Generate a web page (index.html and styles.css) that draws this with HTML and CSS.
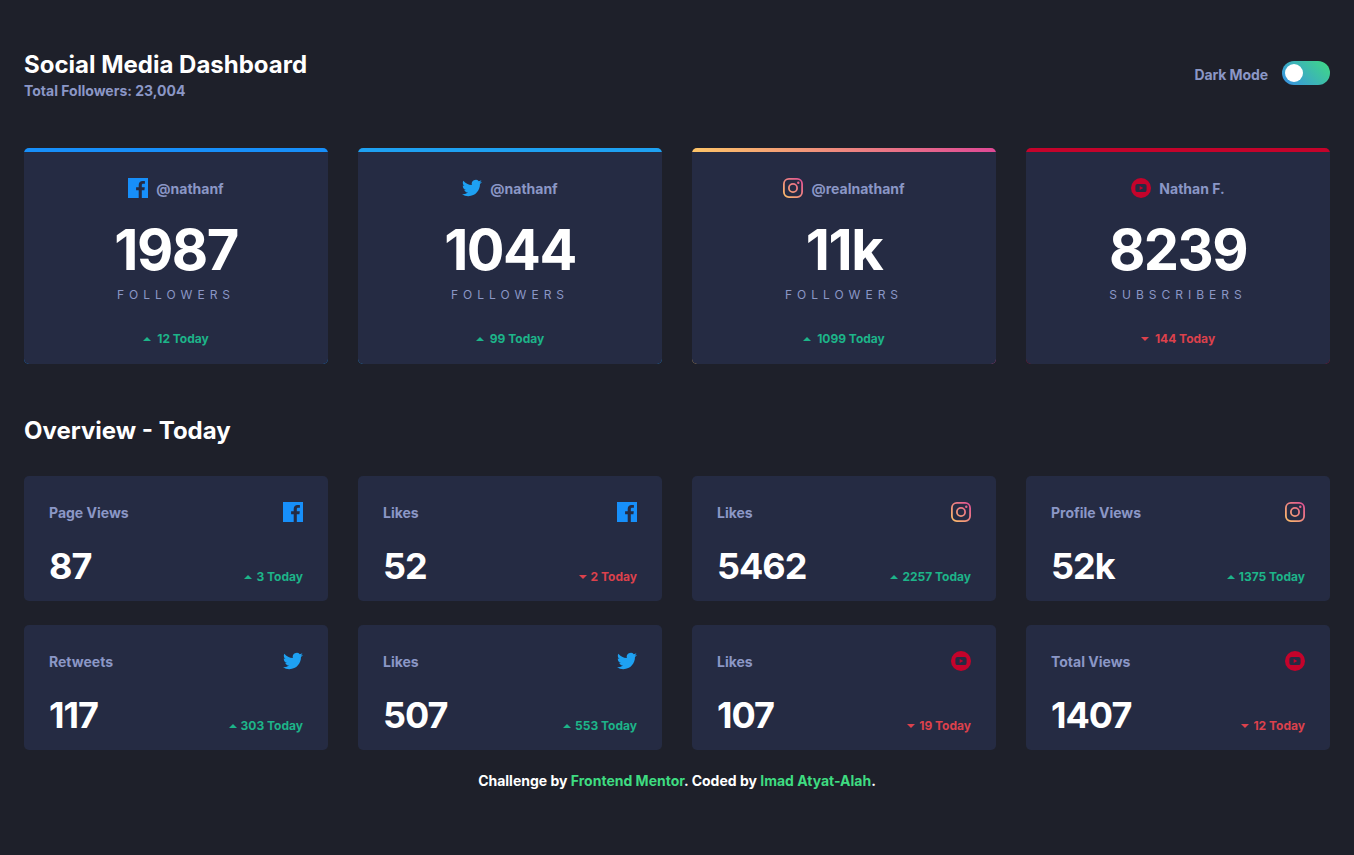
FILE: index.html
```html
<!DOCTYPE html>
<html lang="en">
<head>
<meta charset="utf-8">
<title>Social Media Dashboard</title>
<link rel="stylesheet" href="styles.css">
</head>
<body>
<svg class="defs" aria-hidden="true">
  <defs>
    <linearGradient id="ig" x1="0" y1="20" x2="20" y2="0" gradientUnits="userSpaceOnUse">
      <stop offset="0" stop-color="#fdc468"/>
      <stop offset="1" stop-color="#df4996"/>
    </linearGradient>
    <symbol id="i-fb" viewBox="0 0 20 20">
      <path fill="#178ffa" d="M0 0h20v20H0z"/>
      <path fill="#252b43" d="M10.7 20v-7.75H8.1V9.24h2.6V7c0-2.58 1.58-3.98 3.88-3.98 1.1 0 2.05.08 2.33.12v2.7h-1.6c-1.25 0-1.5.6-1.5 1.47v1.93h2.99l-.39 3.01h-2.6V20z"/>
    </symbol>
    <symbol id="i-tw" viewBox="0 0 24 24">
      <path fill="#1ea1f2" d="M23.953 4.57a10 10 0 01-2.825.775 4.958 4.958 0 002.163-2.723c-.951.555-2.005.959-3.127 1.184a4.92 4.92 0 00-8.384 4.482C7.69 8.095 4.067 6.13 1.64 3.162a4.822 4.822 0 00-.666 2.475c0 1.71.87 3.213 2.188 4.096a4.904 4.904 0 01-2.228-.616v.06a4.923 4.923 0 003.946 4.827 4.996 4.996 0 01-2.212.085 4.936 4.936 0 004.604 3.417 9.867 9.867 0 01-6.102 2.105c-.39 0-.779-.023-1.17-.067a13.995 13.995 0 007.557 2.209c9.053 0 13.998-7.496 13.998-13.985 0-.21 0-.42-.015-.63A9.935 9.935 0 0024 4.59z"/>
    </symbol>
    <symbol id="i-ig" viewBox="0 0 20 20">
      <rect x=".9" y=".9" width="18.2" height="18.2" rx="5" fill="none" stroke="url(#ig)" stroke-width="1.8"/>
      <circle cx="10" cy="10" r="4.1" fill="none" stroke="url(#ig)" stroke-width="1.8"/>
      <circle cx="15.3" cy="4.7" r="1.2" fill="url(#ig)"/>
    </symbol>
    <symbol id="i-yt" viewBox="0 0 20 20">
      <circle cx="10" cy="10" r="10" fill="#c4032b"/>
      <rect x="4.4" y="5.9" width="11.2" height="8.2" rx="2.2" fill="#252b43"/>
      <path fill="#c4032b" d="M8.7 7.9l3.6 2.1-3.6 2.1z"/>
    </symbol>
  </defs>
</svg>

<main class="page">
  <header class="top">
    <div>
      <h1 class="title">Social Media Dashboard</h1>
      <p class="total">Total Followers: 23,004</p>
    </div>
    <div class="mode">
      <span class="mode-text">Dark Mode</span>
      <span class="toggle"><span class="knob"></span></span>
    </div>
  </header>

  <section class="grid followers">
    <article class="card fb"><div class="card-in">
      <div class="handle"><svg class="ico"><use href="#i-fb"/></svg><span>@nathanf</span></div>
      <div class="big">1987</div>
      <div class="unit">FOLLOWERS</div>
      <div class="delta up"><i class="arrow"></i>12 Today</div>
    </div></article>
    <article class="card tw"><div class="card-in">
      <div class="handle"><svg class="ico"><use href="#i-tw"/></svg><span>@nathanf</span></div>
      <div class="big">1044</div>
      <div class="unit">FOLLOWERS</div>
      <div class="delta up"><i class="arrow"></i>99 Today</div>
    </div></article>
    <article class="card ig"><div class="card-in">
      <div class="handle"><svg class="ico"><use href="#i-ig"/></svg><span>@realnathanf</span></div>
      <div class="big">11k</div>
      <div class="unit">FOLLOWERS</div>
      <div class="delta up"><i class="arrow"></i>1099 Today</div>
    </div></article>
    <article class="card yt"><div class="card-in">
      <div class="handle"><svg class="ico"><use href="#i-yt"/></svg><span>Nathan F.</span></div>
      <div class="big">8239</div>
      <div class="unit">SUBSCRIBERS</div>
      <div class="delta down"><i class="arrow"></i>144 Today</div>
    </div></article>
  </section>

  <h2 class="overview">Overview - Today</h2>

  <section class="grid stats">
    <article class="stat"><div class="row"><span class="label">Page Views</span><svg class="ico"><use href="#i-fb"/></svg></div>
      <div class="row low"><span class="num">87</span><span class="delta up"><i class="arrow"></i>3 Today</span></div></article>
    <article class="stat"><div class="row"><span class="label">Likes</span><svg class="ico"><use href="#i-fb"/></svg></div>
      <div class="row low"><span class="num">52</span><span class="delta down"><i class="arrow"></i>2 Today</span></div></article>
    <article class="stat"><div class="row"><span class="label">Likes</span><svg class="ico"><use href="#i-ig"/></svg></div>
      <div class="row low"><span class="num">5462</span><span class="delta up"><i class="arrow"></i>2257 Today</span></div></article>
    <article class="stat"><div class="row"><span class="label">Profile Views</span><svg class="ico"><use href="#i-ig"/></svg></div>
      <div class="row low"><span class="num">52k</span><span class="delta up"><i class="arrow"></i>1375 Today</span></div></article>
    <article class="stat"><div class="row"><span class="label">Retweets</span><svg class="ico"><use href="#i-tw"/></svg></div>
      <div class="row low"><span class="num">117</span><span class="delta up"><i class="arrow"></i>303 Today</span></div></article>
    <article class="stat"><div class="row"><span class="label">Likes</span><svg class="ico"><use href="#i-tw"/></svg></div>
      <div class="row low"><span class="num">507</span><span class="delta up"><i class="arrow"></i>553 Today</span></div></article>
    <article class="stat"><div class="row"><span class="label">Likes</span><svg class="ico"><use href="#i-yt"/></svg></div>
      <div class="row low"><span class="num">107</span><span class="delta down"><i class="arrow"></i>19 Today</span></div></article>
    <article class="stat"><div class="row"><span class="label">Total Views</span><svg class="ico"><use href="#i-yt"/></svg></div>
      <div class="row low"><span class="num">1407</span><span class="delta down"><i class="arrow"></i>12 Today</span></div></article>
  </section>

  <footer class="foot">Challenge by <a href="#">Frontend Mentor</a>. Coded by <a href="#">Imad Atyat-Alah</a>.</footer>
</main>
</body>
</html>
```
FILE: styles.css
```css
* { box-sizing: border-box; }
html, body { margin: 0; }
body {
  background: #1e202a;
  color: #fff;
  font-family: Inter, "Liberation Sans", sans-serif;
  height: 855px;
  overflow: hidden;
}
.defs { position: absolute; width: 0; height: 0; }
.page { padding: 50px 24px 0; }

.top { display: flex; justify-content: space-between; align-items: flex-start; height: 50px; }
.title { margin: 0; font-size: 24px; line-height: 29px; font-weight: 700; }
.total { margin: 3px 0 0; font-size: 14px; line-height: 17px; font-weight: 700; color: #8b97c6; }
.mode { display: flex; align-items: center; gap: 14px; margin-top: 11px; font-size: 14px; font-weight: 700; letter-spacing: -0.1px; color: #8b97c6; }
.mode-text { margin-top: 2px; }
.toggle { display: block; width: 48px; height: 24px; border-radius: 12px; padding: 3px; background: linear-gradient(225deg, #40db82, #388fe7); }
.knob { display: block; width: 18px; height: 18px; border-radius: 50%; background: #fff; }

.grid { display: grid; grid-template-columns: repeat(4, 304px); column-gap: 30px; row-gap: 24px; }
.followers { margin-top: 48px; }

.card { border-radius: 5px; padding-top: 4px; height: 216px; }
.card.fb { background: #178ffa; }
.card.tw { background: #1ea1f2; }
.card.ig { background: linear-gradient(90deg, #fdc468, #df4996); }
.card.yt { background: #c4032b; }
.card-in {
  height: 212px;
  background: #252b43;
  border-radius: 0 0 5px 5px;
  padding-top: 26px;
  display: flex;
  flex-direction: column;
  align-items: center;
}
.handle { display: flex; align-items: center; gap: 8px; height: 20px; font-size: 14px; font-weight: 700; color: #8b97c6; }
.ico { display: block; width: 20px; height: 20px; flex: none; }
.big { margin-top: 18px; font-size: 56px; line-height: 68px; font-weight: 700; letter-spacing: -1.5px; }
.unit { margin-top: 3px; font-size: 12px; line-height: 15px; letter-spacing: 5px; color: #8b97c6; }
.card-in .delta { margin-top: 29px; }
.card-in .arrow { margin-right: 6px; }

.delta { display: inline-flex; align-items: center; font-size: 12px; line-height: 15px; font-weight: 700; }
.up { color: #1db489; }
.down { color: #dc414c; }
.arrow { width: 0; height: 0; margin-right: 4px; border-left: 4.5px solid transparent; border-right: 4.5px solid transparent; }
.up .arrow { border-bottom: 4.5px solid #1db489; }
.down .arrow { border-top: 4.5px solid #dc414c; }

.overview { margin: 52px 0 31px; font-size: 24px; line-height: 29px; font-weight: 700; }

.stat { height: 125px; background: #252b43; border-radius: 5px; padding: 26px 25px 0; }
.row { display: flex; justify-content: space-between; align-items: center; }
.label { font-size: 14px; font-weight: 700; color: #8b97c6; }
.low { align-items: flex-end; margin-top: 22px; }
.num { font-size: 36px; line-height: 44px; font-weight: 700; letter-spacing: -1px; }
.low .delta { margin-bottom: 4px; }

.foot { margin-top: 22px; text-align: center; font-size: 14px; line-height: 17px; font-weight: 700; }
.foot a { color: #3edc81; text-decoration: none; }
```
